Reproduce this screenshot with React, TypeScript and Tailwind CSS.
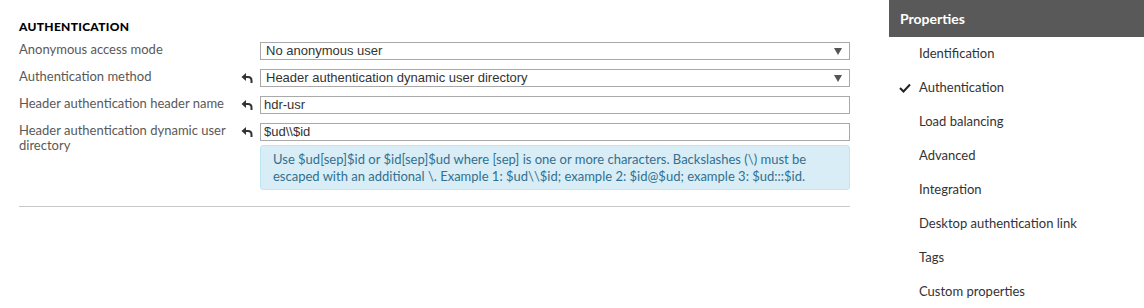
import React from 'react';

const labelFont = { fontFamily: 'Lato, "Noto Sans", sans-serif' };

const UndoIcon: React.FC = () => (
    <svg width="12" height="10" viewBox="0 0 12 10" className="text-[#333]">
        <path d="M5 0 L0.5 4 L5 8 Z" fill="currentColor" />
        <path d="M3.5 4 H7 Q10.5 4 10.5 7.5 V10" fill="none" stroke="currentColor" strokeWidth="2" />
    </svg>
);

const Caret: React.FC = () => (
    <svg width="8" height="7" viewBox="0 0 8 7">
        <path d="M0 0 H8 L4 7 Z" fill="#555" />
    </svg>
);

interface RowProps {
    label: string;
    value: string;
    modified?: boolean;
    select?: boolean;
    children?: React.ReactNode;
}

const FieldRow: React.FC<RowProps> = ({ label, value, modified, select, children }) => (
    <div className="flex items-start">
        <div className="w-[222px] pr-1 text-[13px] leading-[15px] text-[#595959]" style={labelFont}>
            {label}
        </div>
        <div className="w-[19px] h-[18px] flex items-center">
            {modified && <UndoIcon />}
        </div>
        <div className="w-[590px]">
            <div className="h-[18px] border border-[#a9a9a9] bg-white flex items-center justify-between pl-[4px] pr-[7px] text-[13px] text-[#333]">
                <span className={select ? 'pl-[1px]' : '-ml-[1px]'}>{value}</span>
                {select && <Caret />}
            </div>
            {children}
        </div>
    </div>
);

const navItems = [
    'Identification',
    'Authentication',
    'Load balancing',
    'Advanced',
    'Integration',
    'Desktop authentication link',
    'Tags',
    'Custom properties',
];

export default function App() {
    return (
        <div className="w-[1144px] h-[308px] flex bg-white overflow-hidden" style={{ fontFamily: '"Liberation Sans", Arial, sans-serif' }}>
            {/* Main form */}
            <div className="w-[889px] pl-[19px] pt-[20px]">
                <div className="text-[12px] font-black text-black leading-[14px] tracking-[0.3px]" style={labelFont}>
                    AUTHENTICATION
                </div>
                <div className="mt-[8px] flex flex-col gap-[9px]">
                    <FieldRow label="Anonymous access mode" value="No anonymous user" select />
                    <FieldRow label="Authentication method" value="Header authentication dynamic user directory" select modified />
                    <FieldRow label="Header authentication header name" value="hdr-usr" modified />
                    <FieldRow label="Header authentication dynamic user directory" value="$ud\\$id" modified>
                        <div className="mt-[4px] h-[45px] rounded-[3px] border border-[#bce8f1] bg-[#d9edf7] px-[12px] pt-[5px] text-[13px] leading-[17px] text-[#31708f]" style={labelFont}>
                            Use $ud[sep]$id or $id[sep]$ud where [sep] is one or more characters. Backslashes (\) must be escaped with an additional \. Example 1: $ud\\$id; example 2: $id@$ud; example 3: $ud:::$id.
                        </div>
                    </FieldRow>
                </div>
                <div className="mt-[16px] w-[831px] h-px bg-[#c8c8c8]" />
            </div>

            {/* Properties sidebar */}
            <div className="w-[255px]">
                <div className="h-[37px] bg-[#595959] flex items-center pl-[11px] text-[14px] font-bold text-white" style={labelFont}>
                    Properties
                </div>
                <ul style={labelFont}>
                    {navItems.map(item => (
                        <li key={item} className="h-[34px] flex items-center text-[13px] text-[#333]">
                            <span className="w-[30px] flex justify-end pr-[8px]">
                                {item === 'Authentication' && (
                                    <svg width="12" height="10" viewBox="0 0 12 10">
                                        <path d="M1 5 L4.5 8.5 L11 1.5" fill="none" stroke="#222" strokeWidth="2" />
                                    </svg>
                                )}
                            </span>
                            {item}
                        </li>
                    ))}
                </ul>
            </div>
        </div>
    );
}
